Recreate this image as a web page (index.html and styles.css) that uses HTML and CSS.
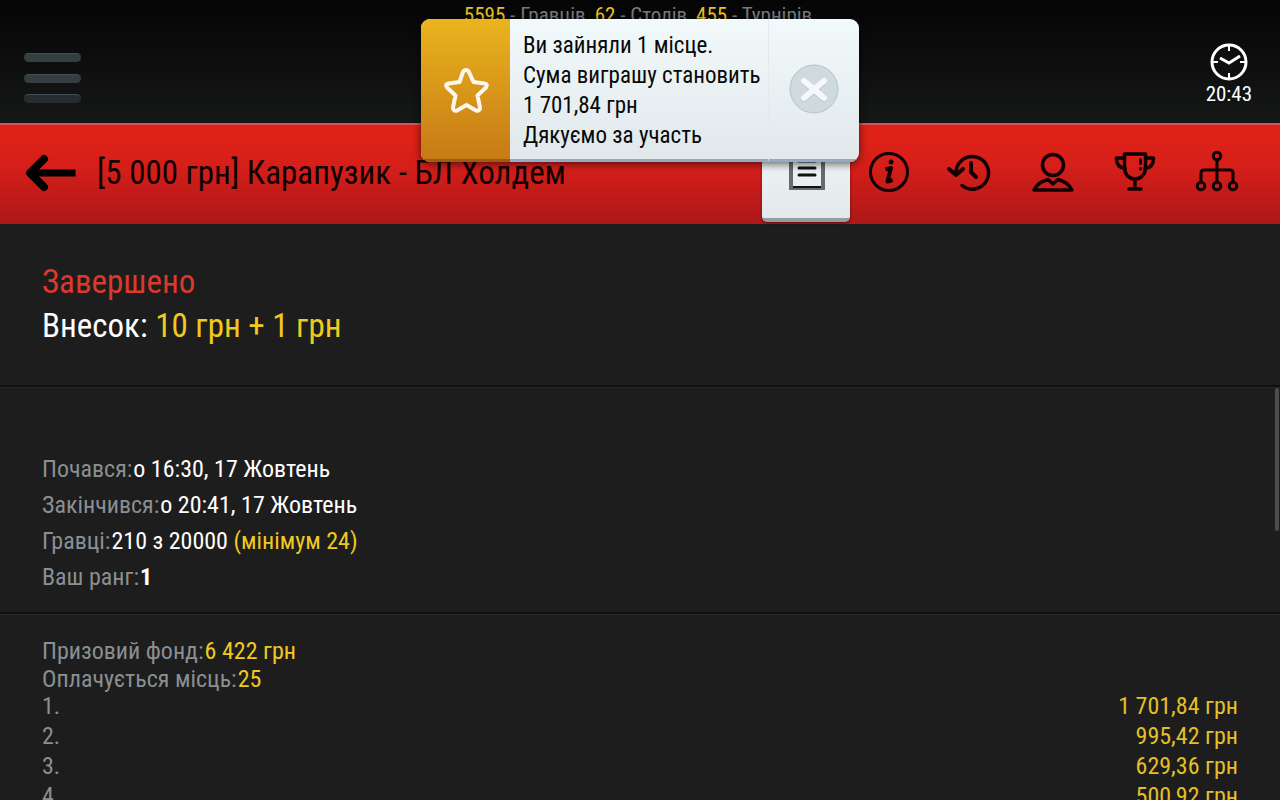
FILE: index.html
```
<!DOCTYPE html>
<html lang="uk">

<head>
  <meta charset="UTF-8">
  <meta name="viewport" content="width=device-width, initial-scale=1.0">
  <title>Карапузик - БЛ Холдем</title>
  <link rel="stylesheet" href="styles.css">
</head>

<body>
  <header class="topbar">
    <button class="menu" aria-label="Меню"><i></i><i></i><i></i></button>
    <div class="stats"><b>5595</b> - Гравців, <b>62</b> - Столів, <b>455</b> - Турнірів</div>
    <div class="clock">
      <svg width="40" height="40" viewBox="0 0 40 40" fill="none" stroke="#fff">
        <circle cx="20" cy="20" r="17" stroke-width="3" />
        <path d="M20 3v6M20 31v6M3 20h6M31 20h6" stroke-width="2" />
        <path d="M11 16l9 5 11-7" stroke-width="3" />
      </svg>
      <time>20:43</time>
    </div>
  </header>

  <div class="titlebar">
    <button class="back" aria-label="Назад">
      <svg width="52" height="40" viewBox="0 0 52 40" fill="none" stroke="#000" stroke-width="8">
        <path d="M8 20h40" stroke-linecap="square" stroke-width="7" />
        <path d="M20 6L6 20l14 14" stroke-linecap="round" stroke-linejoin="round" />
      </svg>
    </button>
    <h1>[5 000 грн] Карапузик - БЛ Холдем</h1>
    <nav class="tabs">
      <button class="active" aria-label="Огляд">
        <svg width="44" height="44" viewBox="0 0 44 44" fill="none">
          <path d="M7 4h32v34H7z" stroke="#666b6d" stroke-width="4" />
          <path d="M9 37h28" stroke="#111" stroke-width="2" />
          <path d="M15 11h16M15 18h16M15 25h16" stroke="#111" stroke-width="3" stroke-linecap="round" />
        </svg>
      </button>
      <button aria-label="Інформація">
        <svg width="44" height="44" viewBox="0 0 44 44" fill="none" stroke="#100" stroke-width="3">
          <circle cx="22" cy="22" r="18.500" />
          <circle cx="24" cy="12" r="2.500" fill="#100" stroke="none" />
          <path d="M18.500 19.500L24 18l-3.500 13.500 5-1.500" stroke-width="4" stroke-linejoin="round" />
        </svg>
      </button>
      <button aria-label="Історія">
        <svg width="44" height="44" viewBox="0 0 44 44" fill="none" stroke="#100" stroke-width="3.500" stroke-linecap="round" stroke-linejoin="round">
          <path d="M7 24A16.300 16.300 0 1 1 13 35.500" />
          <path d="M0 19l7 6 7-6" stroke-width="4" />
          <path d="M22 13v9l5 5" stroke-width="4" />
        </svg>
      </button>
      <button aria-label="Гравці">
        <svg width="44" height="44" viewBox="0 0 44 44" fill="none" stroke="#100" stroke-width="3.500" stroke-linejoin="round">
          <circle cx="22" cy="15" r="10.500" />
          <path d="M3 40c3-6 8-9 14-10.500l5 4.500 5-4.500c6 1.500 11 4.500 14 10.500z" />
        </svg>
      </button>
      <button aria-label="Призи">
        <svg width="44" height="44" viewBox="0 0 44 44" fill="none" stroke="#100" stroke-width="3.500" stroke-linejoin="round" stroke-linecap="round">
          <path d="M11.500 4h21v13c0 8-5 12-10.500 12s-10.500-4-10.500-12z" />
          <path d="M11 8H3.500c0 6 3 10 8.500 10.500M33 8h7.500c0 6-3 10-8.500 10.500" />
          <path d="M22 29v9M16 39h12" />
          <path d="M27.500 9.500v4M27.500 18.500v0.500" stroke-width="3" />
        </svg>
      </button>
      <button aria-label="Сітка">
        <svg width="44" height="44" viewBox="0 0 44 44" fill="none" stroke="#100" stroke-width="3">
          <circle cx="22" cy="6" r="3.800" />
          <circle cx="6" cy="36" r="3.800" />
          <circle cx="22" cy="36" r="3.800" />
          <circle cx="38" cy="36" r="3.800" />
          <path d="M22 10v22M6 32V23q0-3 3-3h26q3 0 3 3v9" />
        </svg>
      </button>
    </nav>
  </div>

  <section class="summary">
    <div class="state">Завершено</div>
    <div>Внесок: <span class="gold">10 грн + 1 грн</span></div>
  </section>

  <main class="scroll">
    <dl class="details">
      <div><dt>Почався:</dt><dd>о 16:30, 17 Жовтень</dd></div>
      <div><dt>Закінчився:</dt><dd>о 20:41, 17 Жовтень</dd></div>
      <div><dt>Гравці:</dt><dd>210 з 20000 <span class="gold">(мінімум 24)</span></dd></div>
      <div><dt>Ваш ранг:</dt><dd><b>1</b></dd></div>
    </dl>

    <section class="prizes">
      <dl>
        <div><dt>Призовий фонд:</dt><dd class="gold">6 422 грн</dd></div>
        <div><dt>Оплачується місць:</dt><dd class="gold">25</dd></div>
      </dl>
      <table>
        <tr><th scope="row">1.</th><td>1 701,84 грн</td></tr>
        <tr><th scope="row">2.</th><td>995,42 грн</td></tr>
        <tr><th scope="row">3.</th><td>629,36 грн</td></tr>
        <tr><th scope="row">4.</th><td>500,92 грн</td></tr>
      </table>
    </section>
    <div class="thumb"></div>
  </main>

  <div class="toast" role="status">
    <div class="toast-icon">
      <svg width="56" height="56" viewBox="0 0 56 56" fill="none" stroke="#fdf6ea" stroke-width="4" stroke-linejoin="round">
        <path d="M28 7q2 0 3 2l4.500 10 11 1.500q4 1 1.500 4l-8.500 8 2.500 12q0 4-4 3l-9.500-5.500-9.500 5.500q-4 1-4-3l2.500-12-8.500-8q-2.500-3 1.500-4l11-1.500L25 9q1-2 3-2z" />
      </svg>
    </div>
    <p>Ви зайняли 1 місце.<br>Сума виграшу становить<br>1 701,84 грн<br>Дякуємо за участь</p>
    <button class="close" aria-label="Закрити">
      <svg width="50" height="50" viewBox="0 0 50 50" fill="none">
        <circle cx="25" cy="25" r="24" fill="#cedade" stroke="#b3c6cb" />
        <path d="M15 18l20 17M35 18L15 35" stroke="#b5c4ca" stroke-width="6" stroke-linecap="round" />
        <path d="M15 17l20 17M35 17L15 34" stroke="#f4f8fa" stroke-width="6" stroke-linecap="round" />
      </svg>
    </button>
  </div>
</body>

</html>
```
FILE: styles.css
```
* {
  box-sizing: border-box;
}

body {
  margin: 0;
  height: 100vh;
  overflow: hidden;
  display: flex;
  flex-direction: column;
  position: relative;
  background: #1d1d1d;
  color: #fff;
  font-family: 'Roboto Condensed', 'Liberation Sans Narrow', Roboto, sans-serif;
  font-size: 24px;
}

button {
  border: none;
  padding: 0;
  background: none;
  cursor: pointer;
}

svg {
  display: block;
  overflow: visible;
}

h1,
p,
dl,
dd {
  margin: 0;
}

.gold {
  color: #efc920;
}

.topbar {
  flex: none;
  height: 123px;
  display: grid;
  grid-template-columns: 1fr auto 1fr;
  padding: 0 28px 0 24px;
  background: linear-gradient(#050505, #161717);
}

.menu {
  width: 57px;
  height: 50px;
  margin-top: 53px;
  display: flex;
  flex-direction: column;
  justify-content: space-between;
}

.menu i {
  width: 100%;
  height: 9px;
  border-radius: 5px;
  background: #343d40;
  border-top: 1px solid #454e51;
}

.menu i:last-child {
  background: #272c30;
}

.stats {
  color: #777b80;
  font-size: 21px;
  line-height: 30px;
}

.stats b {
  color: #e8c21f;
  font-weight: 400;
}

.clock {
  justify-self: end;
  margin-top: 42px;
  display: flex;
  flex-direction: column;
  align-items: center;
  font-size: 21px;
  line-height: 24px;
}

.titlebar {
  flex: none;
  height: 101px;
  display: flex;
  align-items: center;
  padding: 0 22px 4px 24px;
  border-top: 2px solid #d8545a;
  background: linear-gradient(#e02318, #d61f19 40%, #ad1719);
}

.back {
  margin-right: 21px;
}

h1 {
  flex: 1;
  color: #100;
  font-size: 33px;
  font-weight: 400;
  white-space: nowrap;
}

.tabs {
  display: flex;
  align-self: stretch;
}

.tabs button {
  width: 82px;
  height: 94px;
  display: flex;
  align-items: center;
  justify-content: center;
}

.tabs .active {
  width: 88px;
  height: 97px;
  margin-right: -2px;
  border-radius: 5px;
  border-bottom: 4px solid #999c9e;
  background: linear-gradient(#f4f8f9, #e2e8eb);
  box-shadow: 0 1px 3px rgba(0, 0, 0, .5);
}

.summary {
  flex: none;
  height: 163px;
  padding: 36px 42px 0;
  border-bottom: 2px solid #101010;
  font-size: 33px;
  line-height: 44px;
}

.state {
  color: #d93a2b;
}

.scroll {
  flex: 1;
  min-height: 0;
  overflow: hidden;
  position: relative;
  border-top: 1px solid #282828;
}

dl > div {
  display: flex;
  gap: 1px;
}

dt,
th {
  color: #8a8f92;
  font-weight: 400;
}

.details {
  padding: 63px 42px 17px;
  border-bottom: 2px solid #101010;
  line-height: 36px;
}

.prizes {
  padding: 22px 42px 0;
  border-top: 1px solid #282828;
  line-height: 28px;
}

table {
  width: 100%;
  margin-top: -2px;
  border-collapse: collapse;
  line-height: 30px;
}

th,
td {
  padding: 0;
  text-align: left;
}

td {
  color: #e3bf28;
  text-align: right;
}

.thumb {
  position: absolute;
  top: 0;
  right: 1px;
  width: 4px;
  height: 143px;
  border-radius: 2px;
  background: #4d4d4d;
}

.toast {
  position: absolute;
  top: 19px;
  left: 50%;
  transform: translateX(-50%);
  width: 438px;
  display: flex;
  overflow: hidden;
  border-radius: 9px;
  color: #080808;
  background: linear-gradient(#f2f9fa, #e1e8ec);
  box-shadow: 0 2px 8px rgba(0, 0, 0, .6);
}

.toast-icon {
  flex: none;
  width: 89px;
  padding-top: 4px;
  display: flex;
  align-items: center;
  justify-content: center;
  background: linear-gradient(#eab41e, #c67a16);
  border-bottom: 3px solid #9a5d12;
}

.toast p {
  flex: 1;
  padding: 12px 0 8px 13px;
  border-bottom: 3px solid #92acc8;
  font-size: 23px;
  line-height: 30px;
  white-space: nowrap;
}

.close {
  flex: none;
  width: 91px;
  display: flex;
  align-items: center;
  justify-content: center;
  border-left: 1px solid #e1eaed;
  border-bottom: 3px solid #92acc8;
}
```
